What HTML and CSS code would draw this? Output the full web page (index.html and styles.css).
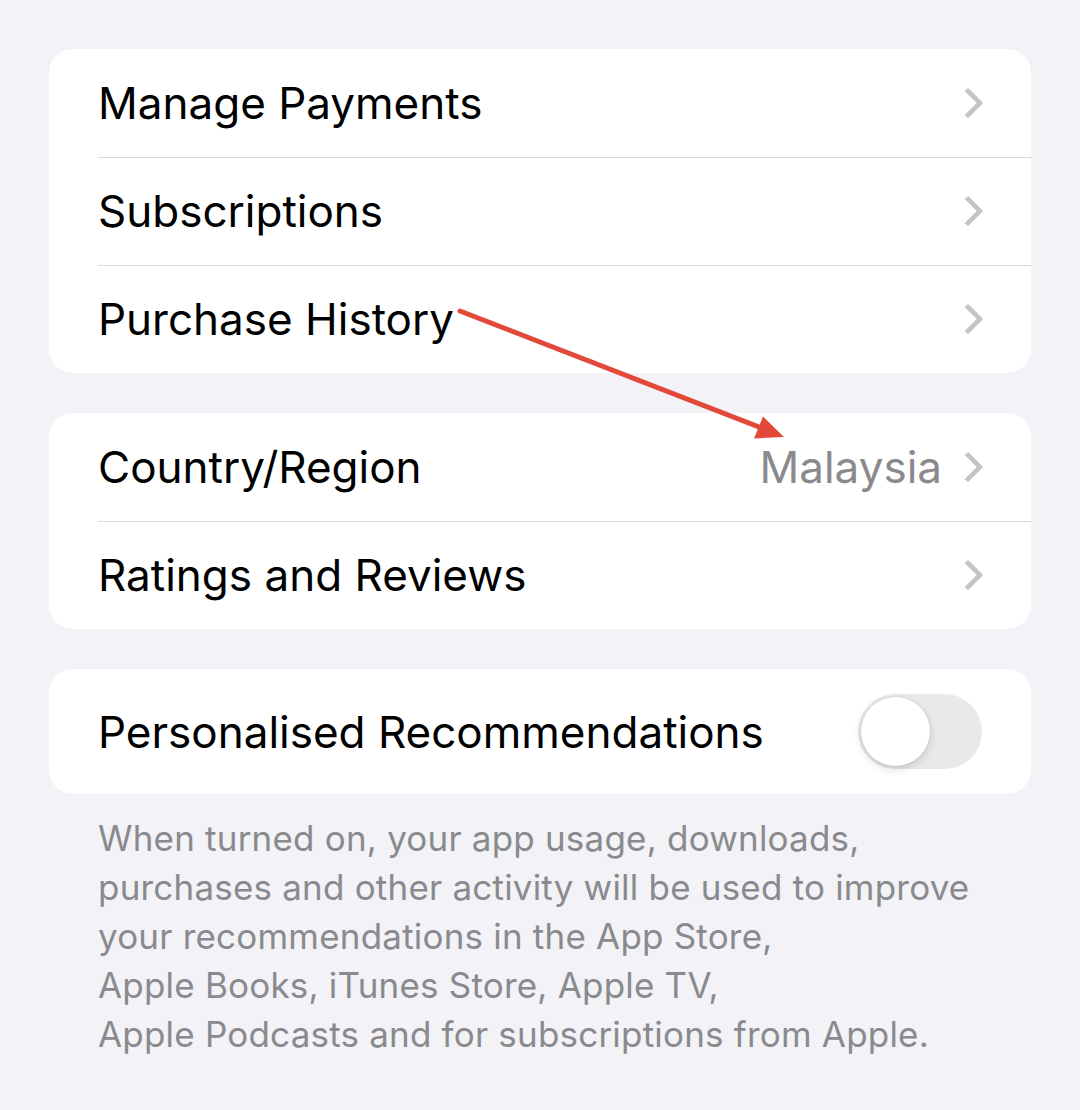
FILE: index.html
```html
<!DOCTYPE html>
<html lang="en">
<head>
<meta charset="utf-8">
<title>Account Settings</title>
<link rel="stylesheet" href="styles.css">
</head>
<body>
<main class="settings">
  <section class="group">
    <div class="row"><span class="label">Manage Payments</span><span class="chevron"></span></div>
    <div class="row"><span class="label">Subscriptions</span><span class="chevron"></span></div>
    <div class="row"><span class="label">Purchase History</span><span class="chevron"></span></div>
  </section>

  <section class="group">
    <div class="row"><span class="label">Country/Region</span><span class="value">Malaysia</span><span class="chevron"></span></div>
    <div class="row"><span class="label">Ratings and Reviews</span><span class="chevron"></span></div>
  </section>

  <section class="group group-toggle">
    <div class="row row-toggle"><span class="label">Personalised Recommendations</span><span class="switch"><span class="knob"></span></span></div>
  </section>

  <p class="footnote">When turned on, your app usage, downloads,<br>purchases and other activity will be used to improve<br>your recommendations in the App Store,<br>Apple Books, iTunes Store, Apple TV,<br>Apple Podcasts and for subscriptions from Apple.</p>
</main>

<svg class="annotation" width="1080" height="1110" viewBox="0 0 1080 1110" aria-hidden="true">
  <line x1="460" y1="311" x2="764" y2="429" stroke="#e2493a" stroke-width="5" stroke-linecap="round"/>
  <polygon points="784,437 754,438.5 763,416.5" fill="#e2493a"/>
</svg>
</body>
</html>
```

FILE: styles.css
```css
html, body {
  margin: 0;
  padding: 0;
}

body {
  background: #f2f2f7;
  font-family: "Inter", "Noto Sans", "Liberation Sans", sans-serif;
  color: #000;
  width: 1080px;
  height: 1110px;
  overflow: hidden;
  position: relative;
}

.settings {
  padding: 49px 49px 0;
  display: flex;
  flex-direction: column;
  gap: 40px;
}

.group {
  background: #fff;
  border-radius: 24px;
  overflow: hidden;
}

.row {
  height: 108px;
  display: flex;
  align-items: center;
  padding: 0 49px 0 49px;
  position: relative;
  box-sizing: border-box;
}

/* hairline between rows, inset to the text column */
.row + .row::before {
  content: "";
  position: absolute;
  top: 0;
  left: 49px;
  right: 0;
  height: 1px;
  background: #d8d8dc;
}

.label {
  flex: 1;
  font-size: 44px;
  letter-spacing: 0;
  white-space: nowrap;
}

.value {
  font-size: 44px;
  color: #8a8a8e;
  margin-right: 21px;
}

.chevron {
  width: 19px;
  height: 31px;
  position: relative;
  flex: none;
}

.chevron::before {
  content: "";
  position: absolute;
  width: 17px;
  height: 17px;
  border-top: 5px solid #c4c4c7;
  border-right: 5px solid #c4c4c7;
  border-radius: 2px;
  transform: rotate(45deg);
  top: 4px;
  left: -6px;
}

.row-toggle {
  height: 125px;
}

.switch {
  width: 124px;
  height: 75px;
  border-radius: 38px;
  background: #e9e9eb;
  position: relative;
  flex: none;
}

.knob {
  position: absolute;
  left: 3px;
  top: 3px;
  width: 69px;
  height: 69px;
  border-radius: 50%;
  background: #fff;
  box-shadow: 0 3px 8px rgba(0, 0, 0, 0.15), 0 0 0 1px rgba(0, 0, 0, 0.04);
}

.footnote {
  margin: -20px 0 0;
  padding: 0 49px;
  font-size: 35px;
  line-height: 49px;
  color: #8a8a8e;
  letter-spacing: 0.2px;
}

.annotation {
  position: absolute;
  left: 0;
  top: 0;
  pointer-events: none;
}
```
